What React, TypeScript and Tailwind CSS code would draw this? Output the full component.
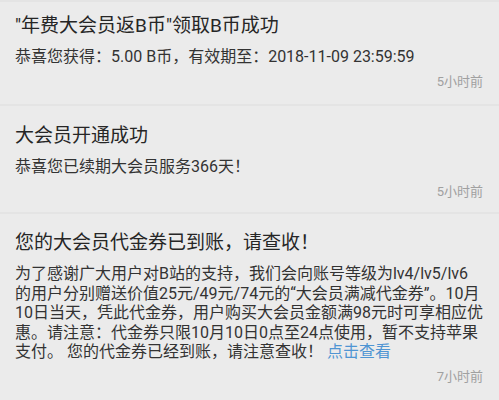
import React from "react";

const FONT = { fontFamily: 'Roboto, "Noto Sans CJK SC", sans-serif' };

type Notice = {
  title: string;
  lines: React.ReactNode[];
  time: string;
  pad: string;
};

const notices: Notice[] = [
  {
    title: '"年费大会员返B币"领取B币成功',
    lines: ["恭喜您获得：5.00 B币，有效期至：2018-11-09 23:59:59"],
    time: "5小时前",
    pad: "pt-[11px] pb-[13px]",
  },
  {
    title: "大会员开通成功",
    lines: ["恭喜您已续期大会员服务366天！"],
    time: "5小时前",
    pad: "pt-[17px] pb-[11px]",
  },
  {
    title: "您的大会员代金券已到账，请查收！",
    lines: [
      "为了感谢广大用户对B站的支持，我们会向账号等级为lv4/lv5/lv6",
      "的用户分别赠送价值25元/49元/74元的“大会员满减代金券”。10月",
      "10日当天，凭此代金券，用户购买大会员金额满98元时可享相应优",
      "惠。请注意：代金券只限10月10日0点至24点使用，暂不支持苹果",
      <>
        支付。 您的代金券已经到账，请注意查收！{" "}
        <span className="text-[#4f95d3]">点击查看</span>
      </>,
    ],
    time: "7小时前",
    pad: "pt-[16px] pb-[12px]",
  },
];

const NoticeCard = ({ notice }: { notice: Notice }) => (
  <div className={`pl-[15px] pr-[16px] border-t-2 border-[#e4e4e4] ${notice.pad}`}>
    <div className="text-[19px] leading-[26px] text-[#262626] whitespace-nowrap">
      {notice.title}
    </div>
    <div
      className={`mt-2 text-[16px] text-[#333333] whitespace-nowrap ${
        notice.lines.length > 1 ? "leading-[19.5px]" : "leading-[20px]"
      }`}
    >
      {notice.lines.map((line, i) => (
        <div key={i}>{line}</div>
      ))}
    </div>
    <div className="mt-[6px] text-right text-[13px] leading-[18px] text-[#a0a0a0]">
      {notice.time}
    </div>
  </div>
);

export default function App() {
  return (
    <div className="w-[499px] h-[400px] overflow-hidden bg-[#ebebeb]" style={FONT}>
      {notices.map((n, i) => (
        <NoticeCard key={i} notice={n} />
      ))}
    </div>
  );
}
